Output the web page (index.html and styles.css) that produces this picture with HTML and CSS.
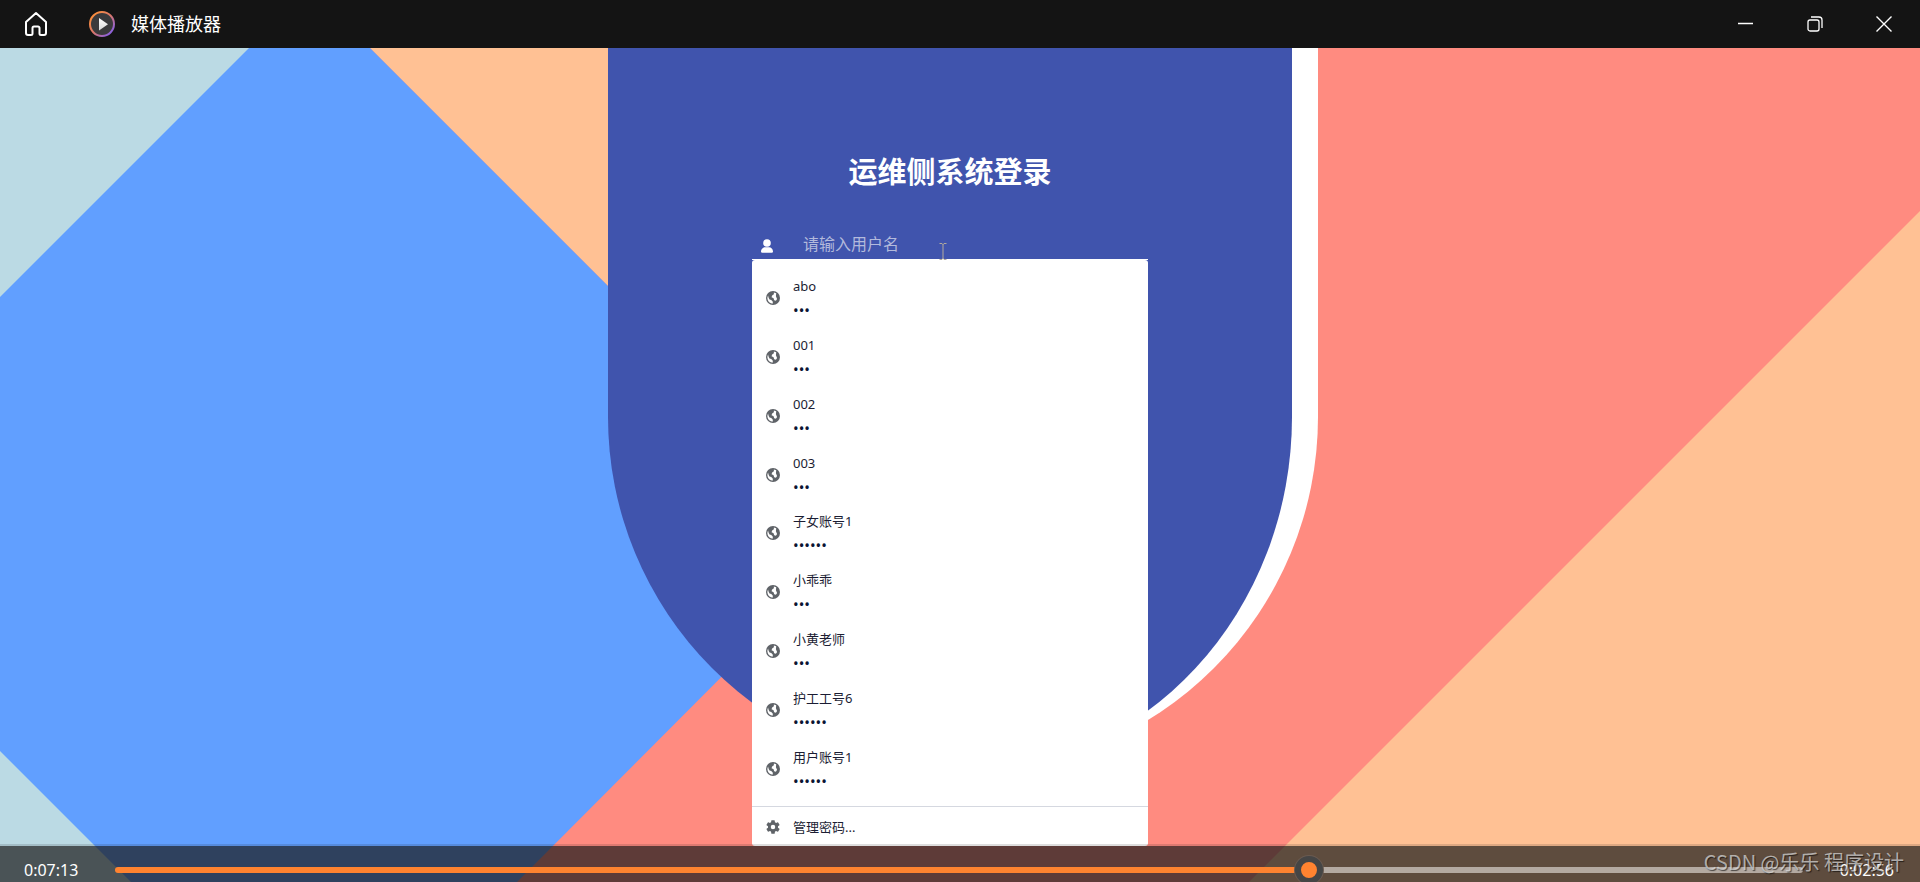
FILE: index.html
```
<!DOCTYPE html>
<html lang="zh-CN">
<head>
  <meta charset="UTF-8" />
  <meta name="viewport" content="width=device-width, initial-scale=1" />
  <title>媒体播放器</title>
  <link rel="stylesheet" href="styles.css">
</head>
<body>
  <!-- Shared icons -->
  <svg class="sprite" aria-hidden="true">
    <symbol id="globe" viewBox="0 0 24 24">
      <circle cx="12" cy="12" r="12" fill="currentColor"/>
      <path fill="#fff" d="M3.500 7.500 2.400 11c-.3 5 3 9.300 7.800 10.400l1.600.1-.3-3.500-2.500-2.500-3-1-1.500-3z"/>
      <path fill="#fff" d="M13.500 2.500l4 1.500-.5 5 2 4.500-2 3-3-.5-1-3.500-3.500-2 1-3 3-2z"/>
    </symbol>
  </svg>

  <header class="titlebar">
    <button class="home" aria-label="主页">
      <svg width="24" height="26" viewBox="0 0 24 26" fill="none" stroke="#fff" stroke-width="2" stroke-linejoin="round">
        <path d="M2 11 12 2l10 9v11a2 2 0 0 1-2 2h-3a1.500 1.500 0 0 1-1.500-1.500V17a1.500 1.500 0 0 0-1.500-1.500h-4A1.500 1.500 0 0 0 8.500 17v5.500A1.500 1.500 0 0 1 7 24H4a2 2 0 0 1-2-2z"/>
      </svg>
    </button>
    <svg class="app-icon" width="26" height="26" viewBox="0 0 26 26">
      <defs>
        <linearGradient id="ring" x1="0" y1="0" x2="1" y2="1">
          <stop offset="0.150" stop-color="#f98c3f"/>
          <stop offset="0.500" stop-color="#d9776c"/>
          <stop offset="0.850" stop-color="#8f62d8"/>
        </linearGradient>
        <linearGradient id="play" x1="0" y1="0" x2="0" y2="1">
          <stop offset="0" stop-color="#fff"/>
          <stop offset="1" stop-color="#d8d8d8"/>
        </linearGradient>
      </defs>
      <circle cx="13" cy="13" r="12" fill="#3a3a3c" stroke="url(#ring)" stroke-width="2"/>
      <path d="M10 7v12.500l9-6.300z" fill="url(#play)"/>
    </svg>
    <span class="app-name">媒体播放器</span>
    <div class="window-controls">
      <button aria-label="最小化">
        <svg width="16" height="16" viewBox="0 0 16 16"><path d="M0 7.500h15" stroke="#fff" stroke-width="1.500"/></svg>
      </button>
      <button aria-label="还原">
        <svg width="16" height="16" viewBox="0 0 16 16" fill="none" stroke="#fff" stroke-width="1.300">
          <rect x="1" y="4" width="11" height="11" rx="2"/>
          <path d="M4 1h8a3 3 0 0 1 3 3v8"/>
        </svg>
      </button>
      <button aria-label="关闭">
        <svg width="16" height="16" viewBox="0 0 16 16"><path d="M.5.500l15 15M15.500.500l-15 15" stroke="#fff" stroke-width="1.400"/></svg>
      </button>
    </div>
  </header>

  <main class="video">
    <svg class="backdrop" viewBox="0 0 1920 834" preserveAspectRatio="none" aria-hidden="true">
      <rect width="1920" height="834" fill="#ff8b80"/>
      <path d="M0 0h300v834H0z" fill="#bbdae4"/>
      <path d="M370 0h530v530z" fill="#ffc194"/>
      <path d="M249 0h121l490 490-343 344H131L0 703V249z" fill="#619fff"/>
      <path d="M1920 163v671h-671z" fill="#ffc194"/>
    </svg>

    <form class="login">
      <h1>运维侧系统登录</h1>
      <div class="field">
        <label for="username" aria-label="用户名">
          <svg width="12" height="14" viewBox="0 0 12 14" fill="#fff">
            <circle cx="6" cy="4" r="3.800"/>
            <path d="M0 12.500C0 10 2 8.300 4 8.300h4c2 0 4 1.700 4 4.200 0 .8-.5 1.200-1.200 1.200H1.200C.5 13.700 0 13.300 0 12.500z"/>
          </svg>
        </label>
        <input type="text" id="username" placeholder="请输入用户名" autocomplete="off">
        <svg class="ibeam" width="8" height="17" viewBox="0 0 8 17" fill="none" stroke="#b3aa9c">
          <path d="M.5.500h2.500l1 1 1-1h2.500M4 1v15M.5 16.500h2.500l1-1 1 1h2.500"/>
        </svg>

        <div class="suggestions">
          <ul>
            <li><button type="button"><svg><use href="#globe"/></svg><span>abo</span><span class="dots">•••</span></button></li>
            <li><button type="button"><svg><use href="#globe"/></svg><span>001</span><span class="dots">•••</span></button></li>
            <li><button type="button"><svg><use href="#globe"/></svg><span>002</span><span class="dots">•••</span></button></li>
            <li><button type="button"><svg><use href="#globe"/></svg><span>003</span><span class="dots">•••</span></button></li>
            <li><button type="button"><svg><use href="#globe"/></svg><span>子女账号1</span><span class="dots">••••••</span></button></li>
            <li><button type="button"><svg><use href="#globe"/></svg><span>小乖乖</span><span class="dots">•••</span></button></li>
            <li><button type="button"><svg><use href="#globe"/></svg><span>小黄老师</span><span class="dots">•••</span></button></li>
            <li><button type="button"><svg><use href="#globe"/></svg><span>护工工号6</span><span class="dots">••••••</span></button></li>
            <li><button type="button"><svg><use href="#globe"/></svg><span>用户账号1</span><span class="dots">••••••</span></button></li>
          </ul>
          <button type="button" class="manage">
            <svg viewBox="2 2 20 20"><path fill="currentColor" d="M19.140 12.940c.04-.3.060-.61.060-.94s-.02-.64-.07-.94l2.030-1.580a.49.490 0 0 0 .12-.61l-1.920-3.320a.49.490 0 0 0-.59-.22l-2.390.96a7 7 0 0 0-1.620-.94l-.36-2.540a.48.480 0 0 0-.48-.41h-3.840a.48.480 0 0 0-.47.410l-.36 2.540a7.200 7.200 0 0 0-1.620.940l-2.390-.96a.48.480 0 0 0-.59.220L2.740 8.870a.47.470 0 0 0 .12.610l2.030 1.580a6 6 0 0 0 0 1.880l-2.030 1.580a.49.490 0 0 0-.12.610l1.920 3.320c.12.220.37.290.59.220l2.390-.96c.5.380 1.030.7 1.620.940l.36 2.540c.05.240.24.410.48.410h3.840c.24 0 .44-.17.470-.41l.36-2.540a7 7 0 0 0 1.620-.94l2.390.96c.22.080.47 0 .59-.22l1.920-3.320a.47.470 0 0 0-.12-.61zM12 15.200a3.200 3.200 0 1 1 0-6.400 3.200 3.200 0 0 1 0 6.400z"/></svg>
            <span>管理密码...</span>
          </button>
        </div>
      </div>
    </form>

    <div class="player">
      <span class="time">0:07:13</span>
      <input type="range" class="seek" aria-label="播放进度" min="0" max="609" value="433" style="--played: 71%">
      <span class="time">0:02:56</span>
    </div>
    <div class="watermark">CSDN @乐乐 程序设计</div>
  </main>
</body>
</html>
```
FILE: styles.css
```
/* Global Styles */
* {
  box-sizing: border-box;
}
body {
  font-family: "Noto Sans", "Noto Sans CJK SC", sans-serif;
  margin: 0;
  height: 100vh;
  display: flex;
  flex-direction: column;
  overflow: hidden;
  background: #141414;
}
button {
  font-family: inherit;
  border: none;
  padding: 0;
  background: none;
  color: inherit;
}
.sprite {
  position: absolute;
  width: 0;
  height: 0;
}

/* Title bar */
.titlebar {
  display: flex;
  align-items: center;
  height: 48px;
  flex-shrink: 0;
  color: #fff;
  padding: 0 2px 0 24px;
}
.titlebar svg {
  display: block;
}
.app-icon {
  margin-left: 41px;
}
.app-name {
  font-size: 18px;
  line-height: 24px;
  margin-left: 16px;
}
.window-controls {
  display: flex;
  margin-left: auto;
}
.window-controls button {
  display: flex;
  align-items: center;
  justify-content: center;
  width: 69px;
  height: 48px;
}

/* Video area */
.video {
  position: relative;
  flex: 1;
  min-height: 0;
  display: grid;
  grid-template-columns: 608fr 710fr 602fr;
  overflow: hidden;
}
.backdrop {
  position: absolute;
  width: 100%;
  height: 100%;
}

/* Login panel */
.login {
  position: relative;
  grid-column: 2;
  height: 724px;
  padding-top: 104px;
  display: flex;
  flex-direction: column;
  align-items: center;
  background: #4054ad;
  border-right: 26px solid #fff;
  border-radius: 0 0 355px 355px;
}
.login h1 {
  margin: 0 0 36px;
  font-size: 29px;
  line-height: 40px;
  color: #fff;
}
.field {
  position: relative;
  display: flex;
  align-items: center;
  width: 396px;
  height: 32px;
  border-bottom: 1px solid #fff;
}
.field label {
  display: flex;
  margin: 4px 30px 0 9px;
}
.field input {
  flex: 1;
  min-width: 0;
  border: none;
  padding: 0;
  background: none;
  outline: none;
  font: inherit;
  font-size: 16px;
  line-height: 24px;
  color: #fff;
}
.field input::placeholder {
  color: #b3badc;
  opacity: 1;
}
.ibeam {
  position: absolute;
  left: 187px;
  top: 15px;
  z-index: 1;
}

/* Saved account list */
.suggestions {
  position: absolute;
  top: 100%;
  left: 0;
  right: 0;
  margin-top: 1px;
  background: #fff;
  border-radius: 3px;
  font-size: 13px;
  line-height: 24px;
  color: #1b1d33;
}
.suggestions ul {
  display: grid;
  grid-auto-rows: 1fr;
  height: 546px;
  margin: 0;
  padding: 9px 0 8px;
  list-style: none;
}
.suggestions li {
  display: grid;
}
.suggestions button {
  display: grid;
  grid-template-columns: 14px 1fr;
  column-gap: 13px;
  align-content: center;
  align-items: center;
  padding: 0 14px;
  font-size: 13px;
  line-height: 24px;
  text-align: left;
}
.suggestions svg {
  grid-row: span 2;
  width: 14px;
  height: 14px;
  color: #5f6368;
}
.suggestions .dots {
  font-size: 15px;
  color: #0b1433;
}
.suggestions .manage {
  width: 100%;
  height: 40px;
  border-top: 1px solid #d5d8e0;
}
.suggestions .manage svg {
  grid-row: auto;
}

/* Player controls */
.player {
  position: absolute;
  left: 0;
  right: 0;
  bottom: 0;
  display: flex;
  align-items: center;
  height: 38px;
  padding: 12px 26px 0 24px;
  gap: 37px;
  border-top: 2px solid rgba(26, 26, 26, 0.15);
  background: rgba(26, 26, 26, 0.7);
  background-clip: padding-box;
  color: #fff;
  font-size: 16px;
  line-height: 24px;
}
.seek {
  flex: 1;
  min-width: 0;
  height: 6px;
  margin: 0;
  appearance: none;
  border-radius: 3px;
  background: linear-gradient(to right, #ff8330 var(--played), #b4aaa2 var(--played));
}
.seek::-webkit-slider-thumb {
  appearance: none;
  width: 28px;
  height: 28px;
  border: 6px solid #454545;
  border-radius: 50%;
  background: #ff8330;
  box-shadow: 0 0 0 1px #6a5a50;
}
.watermark {
  position: absolute;
  right: 16px;
  bottom: 6px;
  font-family: "Noto Sans CJK SC", sans-serif;
  font-size: 20px;
  line-height: 28px;
  color: rgba(225, 225, 225, 0.7);
  text-shadow: 1px 1px 1px rgba(0, 0, 0, 0.6);
}
```
